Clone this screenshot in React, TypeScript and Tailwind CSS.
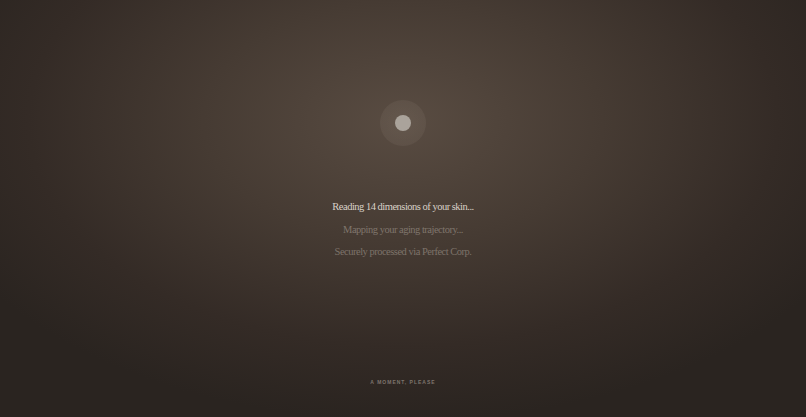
export default function App() {
  return (
    <div className="flex h-[417px] w-full flex-col items-center bg-[radial-gradient(ellipse_62%_72%_at_50%_29%,#594c42_0%,#463b33_40%,#342b26_75%,#2a2420_100%)] pt-[100px] pb-[30px]">
      <div className="flex h-[46px] w-[46px] items-center justify-center rounded-full bg-[radial-gradient(circle,rgba(255,240,225,0.07)_0%,rgba(255,240,225,0.05)_70%,rgba(255,240,225,0)_100%)]">
        <div className="h-4 w-4 rounded-full bg-[#aaa39b]" />
      </div>
      <div className="mt-[50px] flex flex-col items-center font-['Liberation_Serif',serif] text-[10.5px] leading-[22.5px] tracking-[-0.5px]">
        <p className="font-medium text-[#d9d1c7]">Reading 14 dimensions of your skin...</p>
        <p className="text-[#7f756c]">Mapping your aging trajectory...</p>
        <p className="text-[#7d736a]">Securely processed via Perfect Corp.</p>
      </div>
      <div className="flex-1" />
      <p className="font-['Liberation_Sans',sans-serif] text-[5px] leading-[10px] font-bold tracking-[0.2em] text-[#7e756d] uppercase">
        A moment, please
      </p>
    </div>
  );
}
